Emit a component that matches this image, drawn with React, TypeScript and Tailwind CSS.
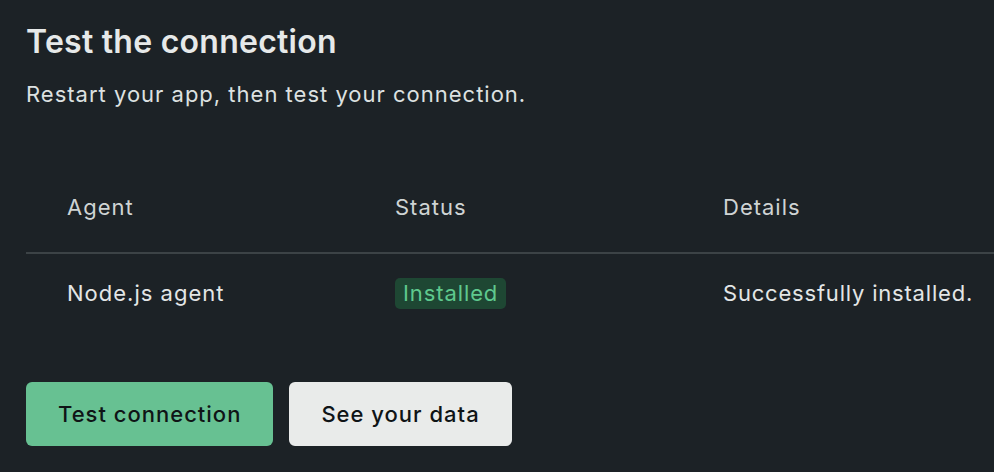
import React from "react";

const rows = [
  {
    agent: "Node.js agent",
    status: "Installed",
    details: "Successfully installed.",
  },
];

const App: React.FC = () => {
  return (
    <div
      className="min-h-[472px] w-[994px] overflow-hidden bg-[#1c2226] pl-[26px] pt-[22px] text-[#e3e6e6]"
      style={{ fontFamily: "Inter, 'Noto Sans', sans-serif" }}
    >
      <h1 className="text-[32px] font-semibold leading-[40px] tracking-[0.25px] text-[#e6e9e9]">
        Test the connection
      </h1>
      <p className="mt-[16px] text-[22px] leading-[32px] tracking-[1px] text-[#dde1e1]">
        Restart your app, then test your connection.
      </p>

      <div className="mt-[52px] w-[968px]">
        <div className="grid grid-cols-[328px_328px_1fr] border-b-2 border-[#3c4346] py-[29px] text-[22px] leading-[32px] tracking-[1px] text-[#cfd4d4]">
          <div className="pl-[41px]">Agent</div>
          <div className="pl-[41px]">Status</div>
          <div className="pl-[41px]">Details</div>
        </div>
        {rows.map(row => (
          <div
            key={row.agent}
            className="grid grid-cols-[328px_328px_1fr] items-center pt-[23px] pb-[25px] text-[22px] leading-[32px] tracking-[1px] text-[#e3e6e6]"
          >
            <div className="pl-[41px]">{row.agent}</div>
            <div className="pl-[41px]">
              <span className="inline-block rounded-[5px] bg-[#1e4733] px-[8px] text-[22px] leading-[31px] tracking-[0.9px] text-[#5fc98e]">
                {row.status}
              </span>
            </div>
            <div className="whitespace-nowrap pl-[41px] tracking-[0.8px]">{row.details}</div>
          </div>
        ))}
      </div>

      <div className="mt-[48px] flex gap-[16px]">
        <button className="h-[64px] rounded-[6px] bg-[#67c192] px-[32px] text-[22px] font-medium tracking-[1px] text-[#0f1416]">
          Test connection
        </button>
        <button className="h-[64px] rounded-[6px] bg-[#e9ebea] px-[32px] text-[22px] font-medium tracking-[1px] text-[#0f1416]">
          See your data
        </button>
      </div>
    </div>
  );
};

export default App;
